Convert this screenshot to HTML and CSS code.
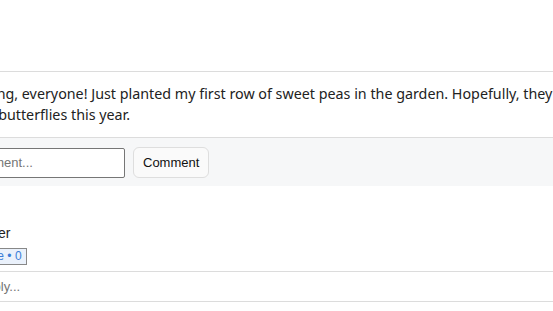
FILE: index.html
```html
<!DOCTYPE html>
<html>
<head>
  <title>Garden Feed</title>
  <meta charset="UTF-8">
  <meta name="viewport" content="width=device-width, initial-scale=1">
  <link rel="stylesheet" href="styles.css">
</head>
<body>
  <div class="feed">
    <div class="post">
      <p class="post-text">Good morning, everyone! Just planted my first row of sweet peas in the garden. Hopefully, they'll attract lots of bees and butterflies this year.</p>
      <form class="comment-form">
        <input type="text" class="comment-input" placeholder="Add a comment...">
        <button type="button" class="button">Comment</button>
      </form>
      <div class="comments">
        <div class="comment">
          <div class="author">Peter</div>
          <button type="button" class="like">Like &bull; 0</button>
        </div>
        <input type="text" class="reply-input" placeholder="Reply...">
      </div>
    </div>
  </div>
</body>
</html>
```

FILE: styles.css
```css
html {
  font-family: "Liberation Sans", Arial, sans-serif;
}
body {
  margin: 0;
  overflow: hidden;
}
.feed {
  margin-left: -96px;
  width: 900px;
  padding-top: 71px;
}
.post {
  border-top: 1px solid #dcdcdc;
}
.post-text {
  margin: 0;
  padding: 11px 12px 12px 12px;
  font-family: "Noto Sans", sans-serif;
  font-size: 14.3px;
  line-height: 21px;
  color: #222;
  width: 736px;
}
.comment-form {
  display: flex;
  align-items: center;
  gap: 8px;
  margin: 0;
  padding: 9px 12px 8px 12px;
  background-color: #f6f7f8;
  border-top: 1px solid #dcdcdc;
}
.comment-input {
  width: 209px;
  height: 30px;
  box-sizing: border-box;
  padding: 4px 8px 4px 14px;
  font-family: "Liberation Sans", Arial, sans-serif;
  font-size: 13px;
  border: 1px solid #767676;
  border-radius: 2px;
}
.button {
  height: 31px;
  padding: 0 9px;
  font-family: "Liberation Sans", Arial, sans-serif;
  font-size: 13px;
  color: #111;
  background-color: #fafafa;
  border: 1px solid #dedede;
  border-radius: 6px;
}
.comments {
  padding-top: 38px;
}
.comment {
  display: flex;
  flex-direction: column;
  align-items: flex-start;
  padding: 0 0 6px 73px;
}
.author {
  font-size: 14px;
  color: #222;
  line-height: 18px;
}
.like {
  margin-top: 6px;
  padding: 0 4px;
  font-family: "Liberation Sans", Arial, sans-serif;
  font-size: 12px;
  line-height: 15px;
  color: #3b7dd8;
  background-color: #eaf1fb;
  border: 1px solid #888;
  border-radius: 0;
}
.reply-input {
  display: block;
  width: 100%;
  height: 31px;
  box-sizing: border-box;
  padding: 4px 73px;
  font-family: "Liberation Sans", Arial, sans-serif;
  font-size: 13px;
  border: none;
  border-top: 1px solid #dcdcdc;
  border-bottom: 1px solid #dcdcdc;
}
```
